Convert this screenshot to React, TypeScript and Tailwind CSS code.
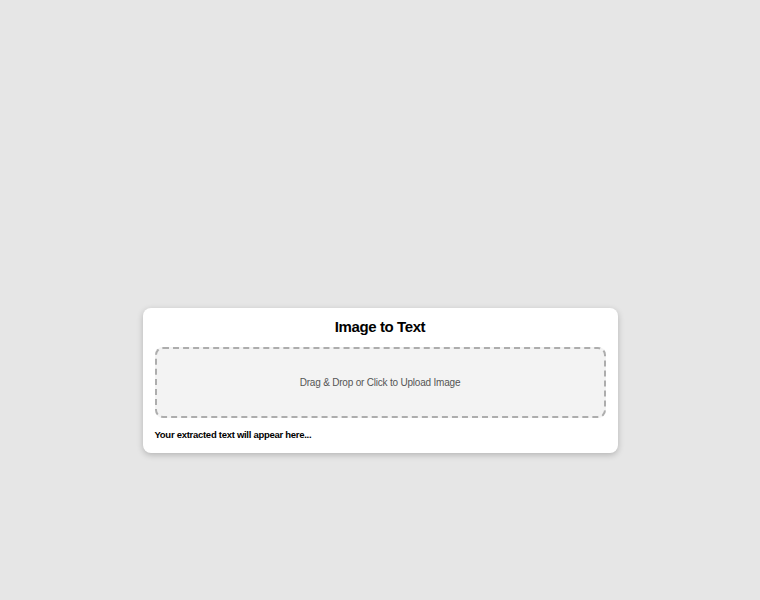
import React from "react";

export default function App() {
  return (
    <div
      className="w-full h-[600px] bg-[#e6e6e6] flex flex-col items-center pt-[308px]"
      style={{ fontFamily: '"Liberation Sans", Arial, Helvetica, sans-serif' }}
    >
      <div className="w-[475px] bg-white rounded-[8px] shadow-[0_2px_6px_rgba(0,0,0,0.22)] px-[12px] pt-[10px] pb-[12px] flex flex-col">
        <h1 className="text-center text-[15px] leading-[17px] font-bold text-black tracking-[-0.4px]">
          Image to Text
        </h1>
        <div className="mt-[12px] h-[71px] border-2 border-dashed border-[#adadad] rounded-[8px] bg-[#f3f3f3] flex items-center justify-center cursor-pointer">
          <span className="text-[10px] leading-[12px] text-[#555555] tracking-[-0.2px]">
            Drag &amp; Drop or Click to Upload Image
          </span>
        </div>
        <p className="mt-[11px] text-[9.5px] leading-[12px] font-bold text-black tracking-[-0.28px]">
          Your extracted text will appear here...
        </p>
      </div>
    </div>
  );
}
